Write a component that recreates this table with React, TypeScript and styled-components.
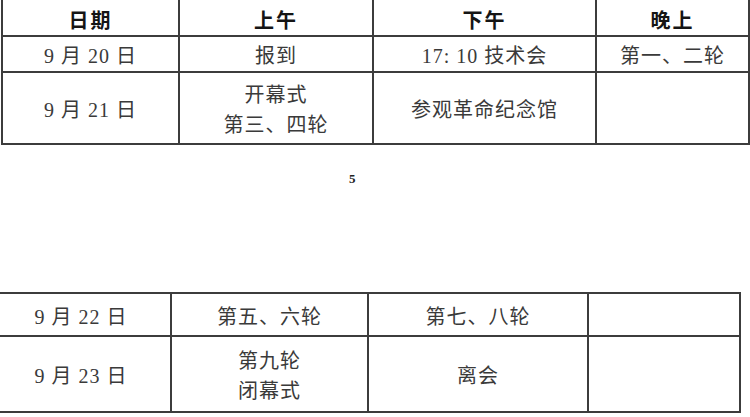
import styled, { createGlobalStyle } from "styled-components";

const GlobalStyle = createGlobalStyle`
  html, body {
    margin: 0;
    padding: 0;
    background: #fff;
  }
  body {
    font-family: "Liberation Serif", "Noto Sans CJK SC", serif;
    overflow: hidden;
  }
`;

type Row = { cells: string[][]; h: number };

const topCols = [177, 194, 223, 153];
const bottomCols = [180, 197, 220, 152];

const topRows: Row[] = [
  { h: 36, cells: [["9 月 20 日"], ["报到"], ["17: 10 技术会"], ["第一、二轮"]] },
  { h: 72, cells: [["9 月 21 日"], ["开幕式", "第三、四轮"], ["参观革命纪念馆"], []] },
];

const bottomRows: Row[] = [
  { h: 43, cells: [["9 月 22 日"], ["第五、六轮"], ["第七、八轮"], []] },
  { h: 76, cells: [["9 月 23 日"], ["第九轮", "闭幕式"], ["离会"], []] },
];

function Body({ rows }: { rows: Row[] }) {
  return (
    <>
      {rows.map((r, i) => (
        <Tr key={i} $h={r.h}>
          {r.cells.map((c, j) => (
            <Td key={j}>
              {c.map((line) => (
                <Line key={line}>{line}</Line>
              ))}
            </Td>
          ))}
        </Tr>
      ))}
    </>
  );
}

export default function App() {
  return (
    <>
      <GlobalStyle />
      <Page>
        <TopTable>
          <colgroup>
            {topCols.map((w, i) => (
              <Col key={i} $w={w} />
            ))}
          </colgroup>
          <tbody>
            <Tr $h={39}>
              {["日期", "上午", "下午", "晚上"].map((t) => (
                <Th key={t}>{t}</Th>
              ))}
            </Tr>
            <Body rows={topRows} />
          </tbody>
        </TopTable>

        <PageNum>5</PageNum>

        <BottomTable>
          <colgroup>
            {bottomCols.map((w, i) => (
              <Col key={i} $w={w} />
            ))}
          </colgroup>
          <tbody>
            <Body rows={bottomRows} />
          </tbody>
        </BottomTable>
      </Page>
    </>
  );
}

const Page = styled.div`
  width: 750px;
  height: 417px;
  overflow: hidden;
`;

const Table = styled.table`
  border-collapse: collapse;
  table-layout: fixed;
`;

const TopTable = styled(Table)`
  width: 747px;
  margin: -4px 0 0 1px;
`;

const BottomTable = styled(Table)`
  width: 749px;
  margin: 0 0 0 -10px;
`;

const Col = styled.col<{ $w: number }>`
  width: ${(p) => p.$w}px;
`;

const Tr = styled.tr<{ $h: number }>`
  height: ${(p) => p.$h}px;
`;

const Th = styled.th`
  border: 2px solid #3c3c3c;
  padding: 6px 0 0;
  text-align: center;
  vertical-align: middle;
  font-size: 20px;
  font-weight: 700;
  color: #151515;
  letter-spacing: 2px;
`;

const Td = styled.td`
  border: 2px solid #3c3c3c;
  padding: 4px 0 0;
  text-align: center;
  vertical-align: middle;
  font-size: 20px;
  color: #3a3a3a;
  letter-spacing: 1px;
`;

const Line = styled.div`
  line-height: 30px;
`;

const PageNum = styled.div`
  margin: 26px 0 0 349px;
  width: 10px;
  height: 121px;
  font-size: 13px;
  line-height: 16px;
  color: #222;
  font-weight: 700;
`;
